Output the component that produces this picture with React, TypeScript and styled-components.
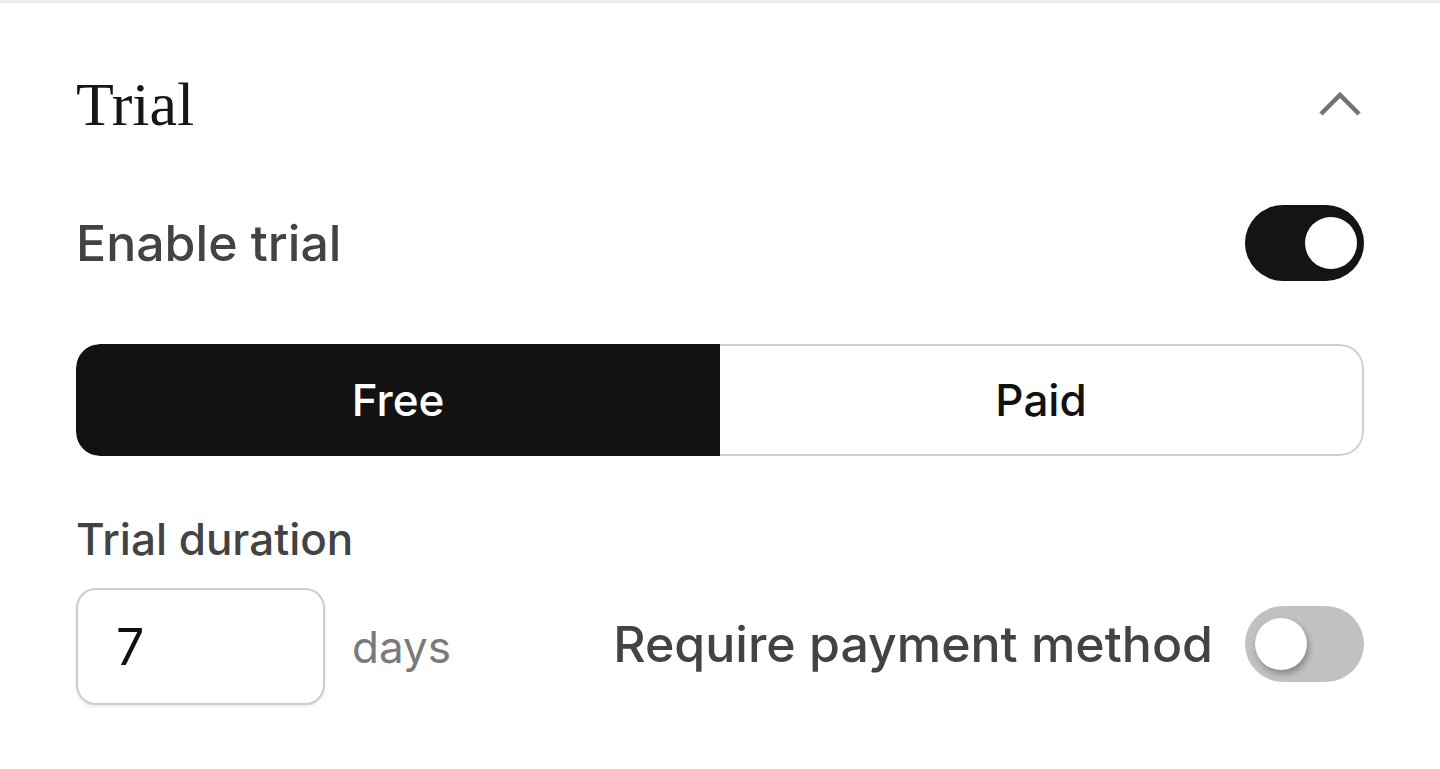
import React, { useState } from "react";
import styled, { createGlobalStyle, css } from "styled-components";

const GlobalStyle = createGlobalStyle`
  html, body {
    margin: 0;
    padding: 0;
    background: #ffffff;
  }
  body {
    font-family: Inter, "Noto Sans", sans-serif;
  }
`;

const Page = styled.div`
  min-height: 769px;
  border-top: 3px solid #ececec;
  box-sizing: border-box;
  padding: 0 76px;
`;

const Header = styled.div`
  display: flex;
  align-items: center;
  justify-content: space-between;
  height: 202px;
`;

const Title = styled.h2`
  margin: 0;
  font-family: "Liberation Serif", "DejaVu Serif", serif;
  font-weight: 400;
  font-size: 62px;
  color: #161616;
`;

const Chevron = styled.button`
  border: 0;
  background: none;
  padding: 0;
  width: 48px;
  height: 48px;
  display: flex;
  align-items: center;
  justify-content: center;
  color: #737373;
`;

const Row = styled.div`
  display: flex;
  align-items: center;
  justify-content: space-between;
`;

const Label = styled.span`
  font-size: 50px;
  font-weight: 500;
  color: #434343;
`;

const Track = styled.button<{ $on: boolean }>`
  position: relative;
  flex-shrink: 0;
  width: 119px;
  height: 76px;
  border: 0;
  padding: 0;
  border-radius: 38px;
  cursor: pointer;
  ${({ $on }) =>
    $on
      ? css`
          background: #141414;
        `
      : css`
          background: #c1c1c1;
        `}
`;

const Knob = styled.span<{ $on: boolean }>`
  position: absolute;
  top: 12px;
  width: 52px;
  height: 52px;
  border-radius: 50%;
  background: #ffffff;
  left: ${({ $on }) => ($on ? "60px" : "10px")};
  box-shadow: ${({ $on }) => ($on ? "none" : "2px 4px 6px rgba(0,0,0,0.3)")};
`;

const Segments = styled.div`
  display: grid;
  grid-template-columns: 1fr 1fr;
  height: 112px;
  margin-top: 63px;
  border-radius: 24px;
  overflow: hidden;
`;

const Segment = styled.button<{ $active: boolean }>`
  font-family: Inter, "Noto Sans", sans-serif;
  font-size: 44px;
  font-weight: 500;
  cursor: pointer;
  ${({ $active }) =>
    $active
      ? css`
          background: #121212;
          color: #ffffff;
          border: 0;
          border-radius: 24px 0 0 24px;
        `
      : css`
          background: #ffffff;
          color: #111111;
          border: 2px solid #cfcfcf;
          border-left: 0;
          border-radius: 0 24px 24px 0;
        `}
`;

const DurationLabel = styled.div`
  margin-top: 56px;
  font-size: 44px;
  font-weight: 500;
  color: #434343;
`;

const DurationRow = styled.div`
  display: flex;
  align-items: center;
  margin-top: 22px;
`;

const NumberInput = styled.input`
  width: 249px;
  height: 117px;
  flex-shrink: 0;
  box-sizing: border-box;
  border: 2px solid #cdcdcd;
  border-radius: 20px;
  box-shadow: 0 2px 3px rgba(0, 0, 0, 0.08);
  padding: 0 38px;
  font-family: Inter, "Noto Sans", sans-serif;
  font-size: 50px;
  color: #111111;
  outline: none;
`;

const Unit = styled.span`
  margin-left: 27px;
  font-size: 44px;
  color: #7a7a7a;
  flex: 1;
`;

const PaymentGroup = styled.div`
  display: flex;
  align-items: center;
  gap: 32px;
  margin-bottom: 6px;
`;

const Toggle: React.FC<{ on: boolean; onClick: () => void }> = ({ on, onClick }) => (
  <Track $on={on} onClick={onClick} aria-pressed={on}>
    <Knob $on={on} />
  </Track>
);

export default function App() {
  const [enabled, setEnabled] = useState(true);
  const [kind, setKind] = useState<"free" | "paid">("free");
  const [requirePayment, setRequirePayment] = useState(false);
  const [days, setDays] = useState("7");

  return (
    <>
      <GlobalStyle />
      <Page>
        <Header>
          <Title>Trial</Title>
          <Chevron aria-label="Collapse">
            <svg width="44" height="28" viewBox="0 0 44 28" fill="none">
              <path d="M3 24 L22 5 L41 24" stroke="currentColor" strokeWidth="4.5" />
            </svg>
          </Chevron>
        </Header>
        <Row>
          <Label>Enable trial</Label>
          <Toggle on={enabled} onClick={() => setEnabled(!enabled)} />
        </Row>
        <Segments>
          <Segment $active={kind === "free"} onClick={() => setKind("free")}>
            Free
          </Segment>
          <Segment $active={kind === "paid"} onClick={() => setKind("paid")}>
            Paid
          </Segment>
        </Segments>
        <DurationLabel>Trial duration</DurationLabel>
        <DurationRow>
          <NumberInput value={days} onChange={(e) => setDays(e.target.value)} />
          <Unit>days</Unit>
          <PaymentGroup>
            <Label>Require payment method</Label>
            <Toggle on={requirePayment} onClick={() => setRequirePayment(!requirePayment)} />
          </PaymentGroup>
        </DurationRow>
      </Page>
    </>
  );
}
